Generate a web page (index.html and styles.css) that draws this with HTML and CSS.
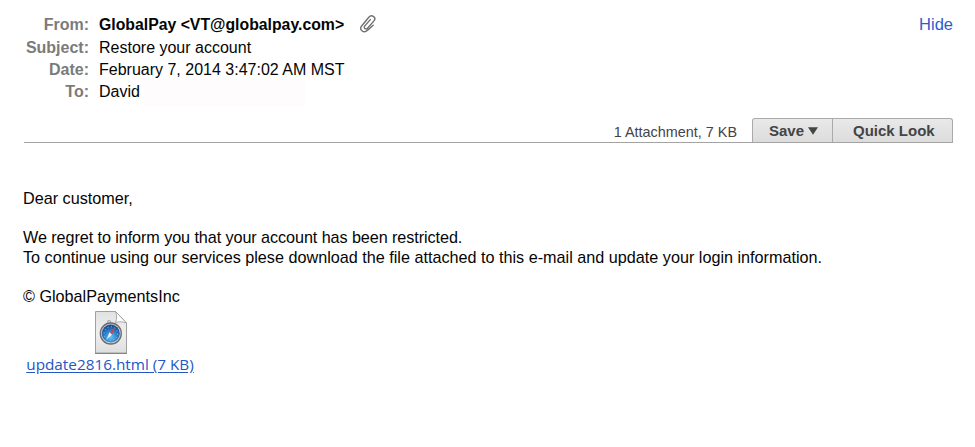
FILE: index.html
```
<!DOCTYPE html>
<html lang="en">
<head>
<meta charset="utf-8">
<title>Restore your account</title>
<link rel="stylesheet" href="styles.css">
</head>
<body>
<header class="head">
  <dl class="fields">
    <dt>From:</dt>
    <dd class="sender"><span class="sender-name">GlobalPay &lt;VT@globalpay.com&gt;</span>
      <svg class="clip" width="20" height="22" viewBox="0 0 20 22" fill="none" stroke="#707070" stroke-width="1.4" stroke-linecap="round" stroke-linejoin="round"><path d="M15.2 12.2 9.6 17.2C5.8 20.6 1 17.200 3.400 13.200L10.800 4.300C13.400 1.300 18.300 3.600 16.400 7.400L9.800 15C8 17 5.200 15.200 6.600 13.100L12.300 6.600"/></svg>
    </dd>
    <dt>Subject:</dt>
    <dd>Restore your account</dd>
    <dt>Date:</dt>
    <dd>February 7, 2014 3:47:02 AM MST</dd>
    <dt>To:</dt>
    <dd class="recipient">David<span class="address"></span></dd>
  </dl>
  <a class="hide">Hide</a>
</header>
<div class="bar">
  <span class="count">1 Attachment, 7 KB</span>
  <div class="buttons">
    <span class="button save">Save<svg width="10" height="8" viewBox="0 0 10 8"><path d="M0 .3h10L5 7.800z" fill="#444"/></svg></span>
    <span class="button look">Quick Look</span>
  </div>
</div>
<main class="message">
  <p>Dear customer,</p>
  <p><span class="notice">We regret to inform you that your account has been restricted.</span><br>To continue using our services plese download the file attached to this e-mail and update your login information.</p>
  <p>© GlobalPaymentsInc</p>
</main>
<div class="attachment">
  <svg class="document" width="34" height="46" viewBox="0 0 34 46">
    <defs>
      <linearGradient id="paper" x1="0" y1="0" x2="0" y2="1"><stop offset="0" stop-color="#e2e2e2"/><stop offset=".55" stop-color="#efefef"/><stop offset="1" stop-color="#dedede"/></linearGradient>
      <radialGradient id="sea" cx=".5" cy=".7" r=".65"><stop offset="0" stop-color="#65c2f5"/><stop offset=".55" stop-color="#2c80cb"/><stop offset="1" stop-color="#164b91"/></radialGradient>
    </defs>
    <path d="M1.500 1.500H21.500L32.500 13V43H1.500z" fill="url(#paper)" stroke="#a0a0a0"/>
    <path d="M1 43.500H33" stroke="#858585"/>
    <path d="M21.500 1.500C23 5 23 9 21.500 12.500 25 11.500 29 11.500 32.500 13z" fill="#fff" stroke="#999" stroke-width=".8"/>
    <circle cx="15" cy="12" r="1.700" fill="#ccc" stroke="#999" stroke-width=".7"/>
    <circle cx="16.800" cy="23.500" r="10.500" fill="#c9ced5" stroke="#6c6c6c" stroke-width="1.300"/>
    <circle cx="16.800" cy="23.500" r="9" fill="url(#sea)"/>
    <circle cx="16.800" cy="23.500" r="6.800" fill="none" stroke="#a5d8f4" stroke-width=".8" stroke-dasharray="1 2.560"/>
    <path d="M21 17.500 18 24.700 15.600 22.300z" fill="#c34c58"/>
    <path d="M12.500 29.500 15.600 22.300 18 24.700z" fill="#e9f5fc"/>
  </svg>
  <a class="file">update2816.html (7 KB)</a>
</div>
</body>
</html>
```
FILE: styles.css
```
body {
  margin: 0;
  background: #fff;
  color: #050505;
  font: 16px "Liberation Sans", Arial, sans-serif;
}
dl, dd, dt, p { margin: 0; }
.head {
  display: flex;
  justify-content: space-between;
  height: 118px;
  padding: 14px 22px 0 0;
  box-sizing: border-box;
}
.fields {
  display: grid;
  grid-template-columns: 89px auto;
  grid-template-rows: 23px 22px 22px 22px;
  column-gap: 10px;
  line-height: 22px;
  white-space: nowrap;
}
.fields dt {
  color: #7b7b7b;
  font-weight: bold;
  text-align: right;
}
.sender { display: flex; }
.sender-name {
  font-weight: bold;
  font-size: 15.800px;
}
.clip { margin: -1px 0 0 14px; }
.recipient { display: flex; }
.address {
  width: 161px;
  height: 28px;
  margin: -2px 0 0 4px;
  background: #fffcfd;
}
.hide {
  color: #2f5bd0;
  font-size: 16.500px;
  line-height: 21px;
}
.bar {
  display: flex;
  justify-content: flex-end;
  height: 25px;
  margin: 0 22px 0 24px;
  border-bottom: 1px solid #a3a3a3;
  box-sizing: border-box;
  color: #444;
}
.count {
  margin-right: 15px;
  font-size: 14.400px;
  line-height: 29px;
}
.buttons {
  display: flex;
  width: 201px;
  box-sizing: border-box;
  border: 1px solid #aaa;
  border-bottom: 0;
  border-radius: 3px 3px 0 0;
  background: linear-gradient(#e9e9e9, #dcdcdc);
  font-size: 15px;
  font-weight: bold;
  line-height: 24px;
}
.button { box-sizing: border-box; white-space: nowrap; }
.save {
  width: 80px;
  padding-left: 16px;
  border-right: 1px solid #aaa;
}
.save svg { margin-left: 4px; vertical-align: 1px; }
.look { padding-left: 20px; }
.message {
  padding: 46px 0 0 23px;
  font-size: 16.200px;
  line-height: 19.600px;
  white-space: nowrap;
}
.message p + p { margin-top: 19.600px; }
.notice { letter-spacing: -.08px; }
.attachment {
  display: flex;
  flex-direction: column;
  align-items: center;
  width: 168px;
  margin: 3px 0 0 26px;
}
.document { margin-left: 2px; }
.file {
  margin-top: -2px;
  color: #2456c8;
  font: 15.300px/20px "Open Sans", sans-serif;
  text-decoration: underline;
  text-underline-offset: 2px;
  white-space: nowrap;
}
```
